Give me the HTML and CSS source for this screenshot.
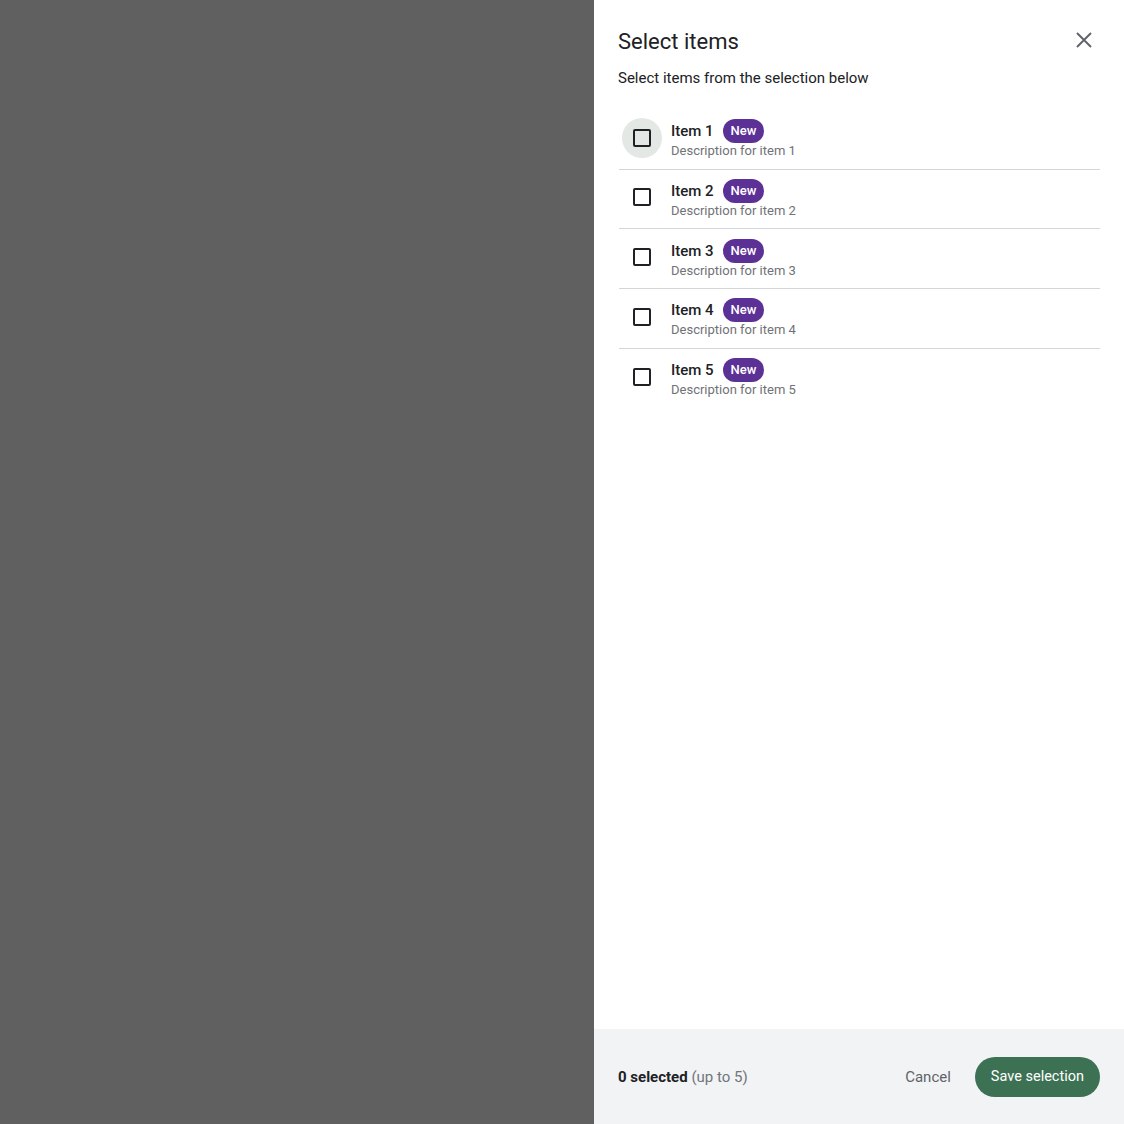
FILE: index.html
```html
<!DOCTYPE html>
<html lang="en">
<head>
<meta charset="utf-8">
<link rel="stylesheet" href="styles.css">
<title>Select items</title>
</head>
<body>
<div class="scrim"></div>
<aside class="panel">
  <div class="content">
    <header class="head">
      <h1 class="title">Select items</h1>
      <button class="close" aria-label="Close">
        <svg width="24" height="24" viewBox="0 0 24 24"><path d="M5 5 L19 19 M19 5 L5 19" stroke="#5f6368" stroke-width="1.9" fill="none"/></svg>
      </button>
    </header>
    <p class="sub">Select items from the selection below</p>
    <ul class="list">
      <li class="row">
        <span class="cbwrap hover"><span class="cb"></span></span>
        <div class="text"><div class="name"><span class="label">Item 1</span><span class="badge">New</span></div><div class="desc">Description for item 1</div></div>
      </li>
      <li class="row">
        <span class="cbwrap"><span class="cb"></span></span>
        <div class="text"><div class="name"><span class="label">Item 2</span><span class="badge">New</span></div><div class="desc">Description for item 2</div></div>
      </li>
      <li class="row">
        <span class="cbwrap"><span class="cb"></span></span>
        <div class="text"><div class="name"><span class="label">Item 3</span><span class="badge">New</span></div><div class="desc">Description for item 3</div></div>
      </li>
      <li class="row">
        <span class="cbwrap"><span class="cb"></span></span>
        <div class="text"><div class="name"><span class="label">Item 4</span><span class="badge">New</span></div><div class="desc">Description for item 4</div></div>
      </li>
      <li class="row">
        <span class="cbwrap"><span class="cb"></span></span>
        <div class="text"><div class="name"><span class="label">Item 5</span><span class="badge">New</span></div><div class="desc">Description for item 5</div></div>
      </li>
    </ul>
  </div>
  <footer class="foot">
    <div class="count"><strong>0 selected</strong> <span class="limit">(up to 5)</span></div>
    <div class="actions">
      <button class="cancel">Cancel</button>
      <button class="save">Save selection</button>
    </div>
  </footer>
</aside>
</body>
</html>
```
FILE: styles.css
```css
* { box-sizing: border-box; }
html, body { margin: 0; height: 100%; }
body {
  font-family: Roboto, "Noto Sans", sans-serif;
  display: flex;
  background: #606060;
  color: #202124;
}
.scrim { flex: 1; background: #606060; }
.panel {
  width: 530px;
  height: 1124px;
  background: #fff;
  display: flex;
  flex-direction: column;
}
.content { flex: 1; padding: 24px 24px 0 24px; }
.head { display: flex; align-items: center; justify-content: space-between; height: 34px; }
.title { margin: 0; font-size: 22px; font-weight: 400; color: #202124; }
.close {
  border: 0; background: none; padding: 0; width: 24px; height: 24px; margin-right: 4px; margin-top: -3px;
  display: flex; align-items: center; justify-content: center;
}
.sub { margin: 9px 0 0; font-size: 15px; color: #202124; line-height: 22px; }
.list { list-style: none; margin: 21px 0 0; padding: 0 0 0 1px; }
.row {
  display: flex; align-items: center; height: 59.67px;
  border-bottom: 1px solid #d3d6d9;
}
.row:last-child { border-bottom: 0; }
.cbwrap {
  width: 40px; height: 40px; border-radius: 50%;
  margin-left: 3px; margin-right: 9px; margin-bottom: 3px;
  display: flex; align-items: center; justify-content: center;
}
.cbwrap.hover { background: #e3e8e4; }
.cb { width: 18px; height: 18px; border: 2px solid #202124; border-radius: 2px; }
.text { display: flex; flex-direction: column; }
.name { font-size: 15px; font-weight: 500; display: flex; align-items: center; line-height: 24px; }
.label { margin-right: 9px; }
.badge {
  background: #5b3196; color: #fff; font-size: 13px; font-weight: 500;
  height: 24px; padding: 0 8px; border-radius: 12px; display: inline-flex; align-items: center;
}
.desc { font-size: 13px; color: #6f7276; letter-spacing: 0; line-height: 16px; }
.foot {
  height: 95px; background: #f2f3f5;
  display: flex; align-items: center; justify-content: space-between;
  padding: 0 24px;
}
.count { font-size: 15px; }
.count strong { font-weight: 700; }
.limit { color: #70757a; }
.actions { display: flex; align-items: center; gap: 8px; }
button { font-family: inherit; cursor: pointer; }
.cancel { border: 0; background: none; font-size: 15px; color: #5f6368; padding: 0 16px; height: 40px; }
.save {
  border: 0; background: #3c7253; color: #fff; font-size: 14.5px;
  height: 40px; padding: 0 16px; border-radius: 20px;
}
```
